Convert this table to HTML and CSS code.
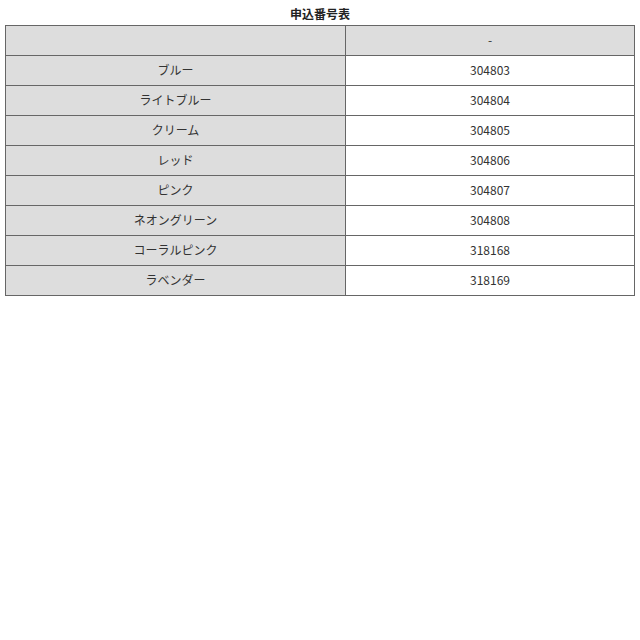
FILE: index.html
```html
<!DOCTYPE html>
<html lang="ja">
<head>
<meta charset="utf-8">
<link rel="stylesheet" href="styles.css">
</head>
<body>
<table class="tbl">
<caption class="cap">申込番号表</caption>
<colgroup><col class="c1"><col class="c2"></colgroup>
<tr class="head"><th></th><th>-</th></tr>
<tr><th>ブルー</th><td>304803</td></tr>
<tr><th>ライトブルー</th><td>304804</td></tr>
<tr><th>クリーム</th><td>304805</td></tr>
<tr><th>レッド</th><td>304806</td></tr>
<tr><th>ピンク</th><td>304807</td></tr>
<tr><th>ネオングリーン</th><td>304808</td></tr>
<tr><th>コーラルピンク</th><td>318168</td></tr>
<tr><th>ラベンダー</th><td>318169</td></tr>
</table>
</body>
</html>
```
FILE: styles.css
```css
html, body { background: #fff; }
body {
  margin: 5px;
  font-family: "Noto Sans CJK JP", "Noto Sans", sans-serif;
  font-size: 12px;
  color: #333;
}
.tbl {
  width: 630px;
  border-collapse: collapse;
  table-layout: fixed;
}
.cap {
  font-weight: bold;
  height: 20px;
  line-height: 18px;
  color: #222;
}
.c1 { width: 340px; }
.tbl th, .tbl td {
  border: 1px solid #666;
  height: 27px;
  padding: 0 0 2px 0;
  text-align: center;
  vertical-align: middle;
  font-weight: normal;
}
.tbl th { background: #ddd; }
.tbl td { background: #fff; }
```
